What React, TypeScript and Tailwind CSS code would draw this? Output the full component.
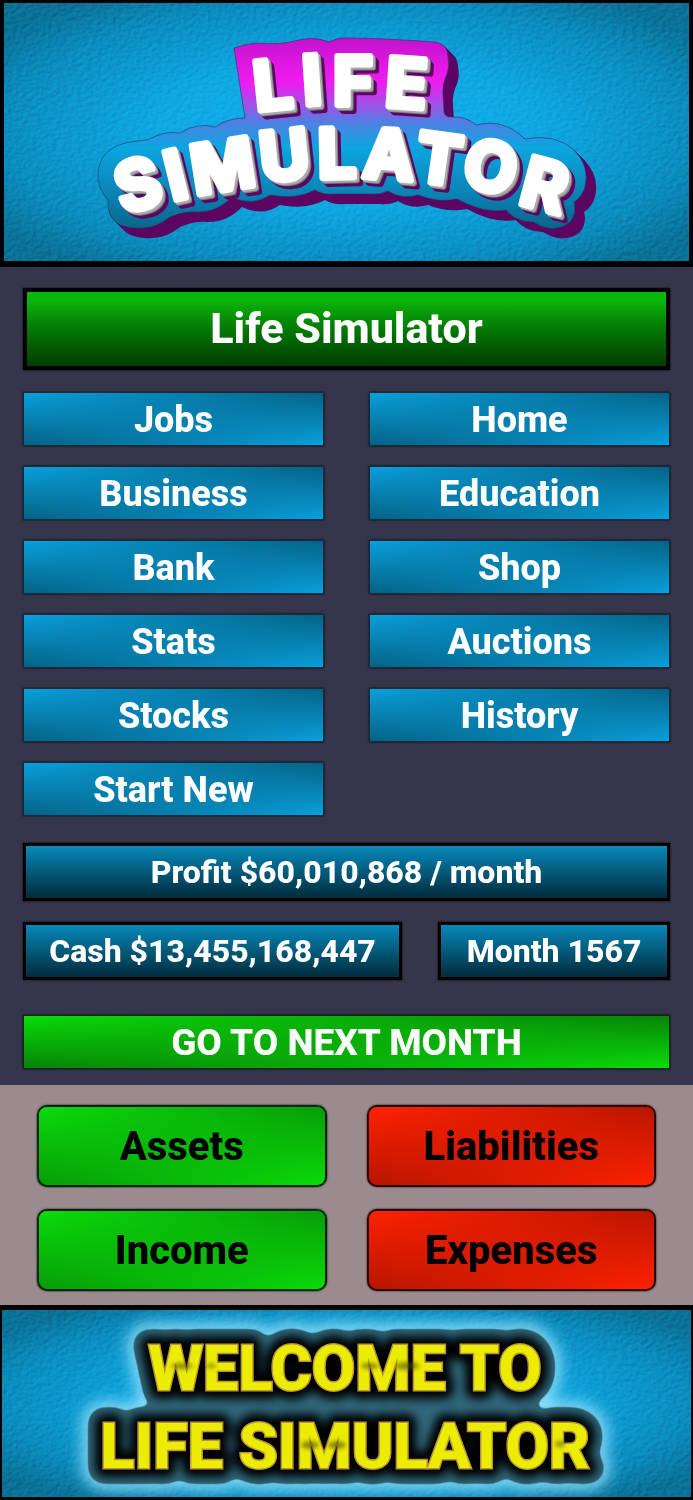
import type { ReactNode } from "react"
import clsx from "clsx"

const menu = [
  "Jobs",
  "Home",
  "Business",
  "Education",
  "Bank",
  "Shop",
  "Stats",
  "Auctions",
  "Stocks",
  "History",
  "Start New",
]

const ledger: { label: string; tone: Tone }[] = [
  { label: "Assets", tone: "green" },
  { label: "Liabilities", tone: "red" },
  { label: "Income", tone: "green" },
  { label: "Expenses", tone: "red" },
]

type Tone = "blue" | "lime" | "green" | "red"

// bottom edge is the element itself, top edge is the masked ::before
const tones: Record<Tone, string> = {
  blue: "bg-linear-to-r from-[#056285] to-[#0aa0dc] before:bg-linear-to-r before:from-[#0aa0dc] before:to-[#056285]",
  lime: "bg-linear-to-r from-[#078307] to-[#0bdc0b] before:bg-linear-to-r before:from-[#0bdc0b] before:to-[#078307]",
  green: "bg-linear-to-r from-[#089c08] to-[#0bdc0b] before:bg-linear-to-r before:from-[#0bdc0b] before:to-[#089c08]",
  red: "bg-linear-to-r from-[#b81600] to-[#ff2200] before:bg-linear-to-r before:from-[#ff2200] before:to-[#b81600]",
}

function GameButton({ tone, className, children }: { tone: Tone; className?: string; children: ReactNode }) {
  return (
    <button
      type="button"
      className={clsx(
        "relative isolate flex items-center justify-center overflow-hidden pt-0.5 font-extrabold",
        "before:absolute before:inset-0 before:-z-10 before:content-[''] before:[mask-image:linear-gradient(to_bottom,black,transparent)]",
        tones[tone],
        className,
      )}
    >
      {children}
    </button>
  )
}

function InfoBox({ children }: { children: ReactNode }) {
  return (
    <p className="flex h-[58px] items-center justify-center border-3 border-black bg-linear-to-b from-[#0789bb] via-[#045a7a] to-[#022c3d] text-[32px] font-extrabold whitespace-nowrap shadow-[0_0_2px_black]">
      {children}
    </p>
  )
}

function Texture({ id, y, height }: { id: string; y: number; height: number }) {
  return (
    <>
      <defs>
        <radialGradient id={`${id}-sky`} cx="0.5" cy="0.5" r="0.62">
          <stop offset="0" stopColor="#10b3f2" />
          <stop offset="0.45" stopColor="#0fa7e2" />
          <stop offset="0.8" stopColor="#0b8cbe" />
          <stop offset="1" stopColor="#0a7197" />
        </radialGradient>
        <filter id={`${id}-grain`} x="0" y="0" width="1" height="1" colorInterpolationFilters="sRGB">
          <feTurbulence type="fractalNoise" baseFrequency="0.2 0.26" numOctaves="2" seed="4" />
          <feColorMatrix values="0 0 0 0 0  0 0 0 0 0  0 0 0 0 0  1 0 0 0 0" />
          <feDiffuseLighting surfaceScale="1.4" diffuseConstant="0.72" lightingColor="#fff">
            <feDistantLight azimuth="225" elevation="45" />
          </feDiffuseLighting>
        </filter>
      </defs>
      <rect x="0" y={y} width="693" height={height} fill={`url(#${id}-sky)`} />
      <rect
        x="0"
        y={y}
        width="693"
        height={height}
        filter={`url(#${id}-grain)`}
        opacity="0.28"
        className="mix-blend-overlay"
      />
    </>
  )
}

const plate =
  "M234 48Q245 44 257 43Q275 45 290 42Q314 35 329 42Q336 38 345 38Q380 38 435 42Q448 44 448 57Q450 66 447 74Q442 84 443 94L444 112Q445 117 451 117Q466 116 476 125Q504 118 525 139Q555 133 574 150Q590 166 585 187Q582 197 574 202Q577 214 570 222Q554 235 533 222Q516 222 506 210Q484 214 457 199Q438 203 418 195Q402 200 388 191Q380 195 370 194L335 194Q322 195 315 190Q296 200 270 195Q252 207 232 197Q216 213 197 212Q184 211 170 217Q156 228 143 228Q106 230 108 200Q96 187 98 172Q101 144 138 141Q148 141 156 136Q168 131 180 133Q197 122 215 127Q228 118 245 118Z"

const depth = [10, 9, 8, 7, 6, 5, 4, 3, 2, 1]

function Logo() {
  return (
    <svg viewBox="4 3 685 258" className="block w-full" role="img" aria-label="Life Simulator">
      <Texture id="top" y={0} height={267} />
      <defs>
        <linearGradient id="plate" gradientUnits="userSpaceOnUse" x1="0" y1="38" x2="0" y2="230">
          <stop offset="0" stopColor="#c412cc" />
          <stop offset="0.23" stopColor="#f01cf0" />
          <stop offset="0.34" stopColor="#a64ee8" />
          <stop offset="0.44" stopColor="#4f80e2" />
          <stop offset="0.57" stopColor="#0ca6e0" />
          <stop offset="0.84" stopColor="#0b7eae" />
          <stop offset="1" stopColor="#096489" />
        </linearGradient>
      </defs>
      {depth.map((d) => (
        <path key={d} d={plate} transform={`translate(${d} ${d})`} fill="#5c0662" />
      ))}
      <path d={plate} fill="url(#plate)" stroke="#1d3566" strokeWidth="0.6" />
      {/* extruded side of the letters, then the white face */}
      <g fill="#5c0662" stroke="#5c0662">
        {[6, 5, 4].map((d) => (
          <use key={d} href="#letters" x={d} y={d} />
        ))}
      </g>
      <g fill="#77797a" stroke="#77797a">
        <use href="#letters" x="3" y="3" />
      </g>
      <g fill="#a9abab" stroke="#a9abab">
        <use href="#letters" x="2" y="2" />
      </g>
      <g fill="#fff" stroke="#fff">
        <g
          id="letters"
          strokeWidth="6"
          strokeLinejoin="round"
          className="font-[Inter,sans-serif] text-[68px] font-bold"
        >
          <text x="256 304 333 384" y="111 105 105 106" rotate="-6 -4 0 4">
            LIFE
          </text>
          <text
            x="123 172 195 262 318 362 413 460 517"
            y="214 201 195 182 178 177 180 185 203"
            rotate="-16 -14 -9 -6 -1 4 8 12 15"
          >
            SIMULATOR
          </text>
        </g>
      </g>
    </svg>
  )
}

function Welcome() {
  return (
    <svg viewBox="2 1310 689 187" className="block w-full">
      <Texture id="bottom" y={1305} height={195} />
      <defs>
        <filter id="glow" x="-20%" y="-30%" width="140%" height="160%">
          <feGaussianBlur stdDeviation="8" />
        </filter>
        <filter id="soft" x="-20%" y="-30%" width="140%" height="160%">
          <feGaussianBlur stdDeviation="5" />
        </filter>
        <filter id="smudge" x="-10%" y="-50%" width="120%" height="200%">
          <feGaussianBlur stdDeviation="2" />
        </filter>
        {/* blur and re-threshold to melt the outline into one smooth shape */}
        <filter id="melt" x="-20%" y="-30%" width="140%" height="160%" colorInterpolationFilters="sRGB">
          <feGaussianBlur stdDeviation="5" />
          <feComponentTransfer>
            <feFuncA type="linear" slope="8" intercept="-3.5" />
          </feComponentTransfer>
        </filter>
      </defs>
      <g fill="#8fe0fb" stroke="#8fe0fb" strokeWidth="42" strokeLinejoin="round" filter="url(#glow)">
        <use href="#welcome" />
      </g>
      <g fill="#2f6679" stroke="#2f6679" strokeWidth="32" strokeLinejoin="round" filter="url(#melt)">
        <use href="#welcome" />
        <path d="M170 1395H520V1420H170Z" />
      </g>
      <g fill="#000" stroke="#000" strokeWidth="18" strokeLinejoin="round" filter="url(#soft)">
        <use href="#welcome" />
      </g>
      <g fill="#ecec00" stroke="#b8943f" strokeWidth="3" paintOrder="stroke">
        <g id="welcome" textAnchor="middle" className="font-[Roboto,sans-serif] text-[63px] font-extrabold">
          <text x="345" y="1390">
            WELCOME TO
          </text>
          <text x="345" y="1468">
            LIFE SIMULATOR
          </text>
        </g>
      </g>
      <g fill="#4a4a00" opacity="0.6" filter="url(#smudge)">
        <ellipse cx="182" cy="1366" rx="11" ry="3" />
        <ellipse cx="211" cy="1366" rx="5" ry="2" />
        <ellipse cx="370" cy="1366" rx="9" ry="3" />
        <ellipse cx="407" cy="1366" rx="12" ry="4" />
        <ellipse cx="310" cy="1445" rx="9" ry="4" />
        <ellipse cx="337" cy="1445" rx="9" ry="4" />
        <ellipse cx="560" cy="1444" rx="5" ry="3" />
      </g>
    </svg>
  )
}

export default function App() {
  return (
    <div className="bg-black font-[Roboto,sans-serif] font-bold text-white">
      <header className="border-x-4 border-t-3 border-b-6 border-black">
        <Logo />
      </header>

      <main>
        <section className="bg-[#35364b] px-[23px] pt-[21px] pb-4">
          <h1 className="flex h-[82px] items-center justify-center border-4 border-black bg-linear-to-b from-[#0bb70b] from-10% via-[#048004] via-45% to-[#013d01] pb-0.5 text-[43px] font-extrabold shadow-[0_0_2px_black]">
            Life Simulator
          </h1>

          <nav className="mt-[22px] grid grid-cols-2 gap-x-[45px] gap-y-5">
            {menu.map((item) => (
              <GameButton key={item} tone="blue" className="h-[54px] border border-[#122d40] text-[36px] shadow-[0_0_2px_black]">
                {item}
              </GameButton>
            ))}
          </nav>

          <div className="mt-[27px]">
            <InfoBox>Profit $60,010,868 / month</InfoBox>
          </div>
          <div className="mt-[21px] grid grid-cols-[379fr_232fr] gap-9">
            <InfoBox>Cash $13,455,168,447</InfoBox>
            <InfoBox>Month 1567</InfoBox>
          </div>

          <GameButton tone="lime" className="mt-[35px] h-[54px] w-full border border-[#0b2a14] text-[37px] shadow-[0_0_2px_black]">
            GO TO NEXT MONTH
          </GameButton>
        </section>

        <section className="grid grid-cols-2 gap-x-10 gap-y-[22px] bg-[#9b8b8e] px-[37px] pt-5 pb-[14px]">
          {ledger.map(({ label, tone }) => (
            <GameButton
              key={label}
              tone={tone}
              className="h-[82px] rounded-[10px] border-2 border-black/80 text-[40px] text-black shadow-[0_0_2px_black]"
            >
              {label}
            </GameButton>
          ))}
        </section>
      </main>

      <footer className="border-x-2 border-t-5 border-b-3 border-black">
        <Welcome />
      </footer>
    </div>
  )
}
